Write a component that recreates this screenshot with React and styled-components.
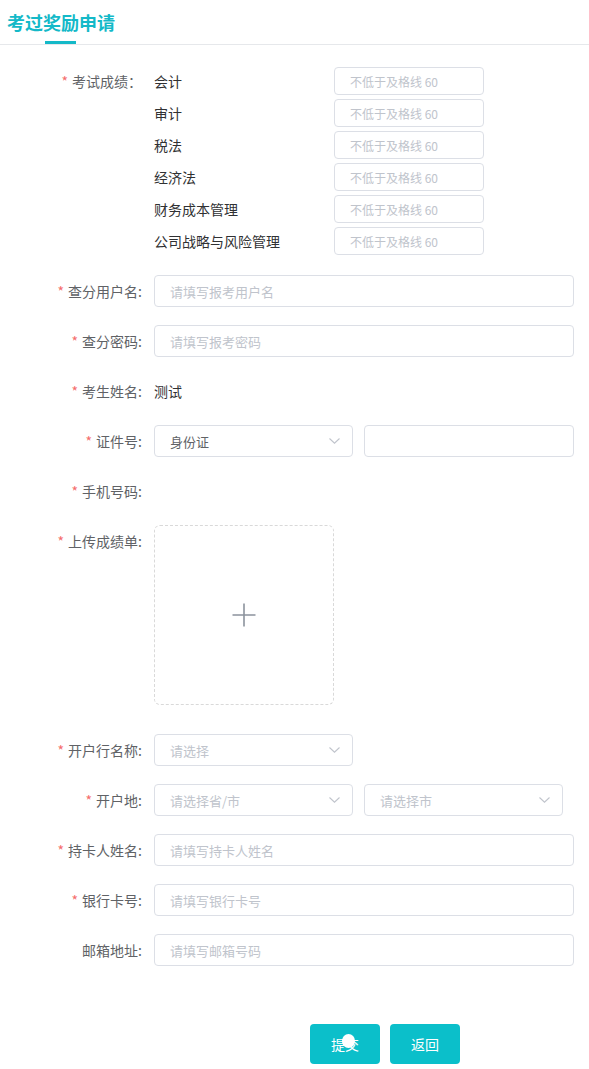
import React from 'react';
import styled, { createGlobalStyle } from 'styled-components';

const subjects = ['会计', '审计', '税法', '经济法', '财务成本管理', '公司战略与风险管理'];

function Chevron() {
  return (
    <svg width="11" height="6" viewBox="0 0 11 6" fill="none">
      <path d="M0.5 0.5 L5.5 5.2 L10.5 0.5" stroke="#c0c4cc" strokeWidth="1.1" />
    </svg>
  );
}

function Select({ value, placeholder }) {
  return (
    <StSelect>
      <StSelectText $empty={!value}>{value || placeholder}</StSelectText>
      <Chevron />
    </StSelect>
  );
}

function Item({ label, required, children, $gap }) {
  return (
    <StItem $gap={$gap}>
      <StLabel>
        {required && <StStar>*</StStar>}
        {label}
      </StLabel>
      <StControl>{children}</StControl>
    </StItem>
  );
}

function App() {
  return (
    <StPage>
      <GlobalStyle />
      <StHeader>
        <StTitle>考过奖励申请</StTitle>
        <StTabBar />
      </StHeader>

      <StForm>
        <StScoreItem>
          <StScoreLabel>
            <StStar>*</StStar>考试成绩：
          </StScoreLabel>
          <StScoreList>
            {subjects.map((s) => (
              <StScoreRow key={s}>
                <StSubject>{s}</StSubject>
                <StScoreInput placeholder="不低于及格线 60" />
              </StScoreRow>
            ))}
          </StScoreList>
        </StScoreItem>

        <Item label="查分用户名:" required>
          <StInput placeholder="请填写报考用户名" />
        </Item>
        <Item label="查分密码:" required>
          <StInput placeholder="请填写报考密码" />
        </Item>
        <Item label="考生姓名:" required>
          <StValue>测试</StValue>
        </Item>
        <Item label="证件号:" required>
          <StPair>
            <Select value="身份证" />
            <StInput $width="210px" />
          </StPair>
        </Item>
        <Item label="手机号码:" required>
          <StValue />
        </Item>
        <Item label="上传成绩单:" required $gap="29px">
          <StUpload>
            <svg width="24" height="24" viewBox="0 0 24 24">
              <path d="M12 0.5 V23.5 M0.5 12 H23.5" stroke="#8c939d" strokeWidth="1.6" />
            </svg>
          </StUpload>
        </Item>
        <Item label="开户行名称:" required>
          <Select placeholder="请选择" />
        </Item>
        <Item label="开户地:" required>
          <StPair>
            <Select placeholder="请选择省/市" />
            <Select placeholder="请选择市" />
          </StPair>
        </Item>
        <Item label="持卡人姓名:" required>
          <StInput placeholder="请填写持卡人姓名" />
        </Item>
        <Item label="银行卡号:" required>
          <StInput placeholder="请填写银行卡号" />
        </Item>
        <Item label="邮箱地址:" $gap="0">
          <StInput placeholder="请填写邮箱号码" />
        </Item>
      </StForm>

      <StFooter>
        <StButton>
          提交
          <StCursor />
        </StButton>
        <StButton>返回</StButton>
      </StFooter>
    </StPage>
  );
}

export default App;

const GlobalStyle = createGlobalStyle`
  body {
    margin: 0;
    background: #fff;
    font-family: "Noto Sans CJK SC", "Noto Sans", sans-serif;
  }
  input::placeholder {
    color: #c0c4cc;
  }
`;

const StPage = styled.div`
  width: 589px;
`;

const StHeader = styled.div`
  position: relative;
  height: 44px;
  border-bottom: 1px solid #e6e8eb;
`;

const StTitle = styled.h1`
  margin: 0;
  padding-left: 7px;
  font-size: 18px;
  font-weight: bold;
  line-height: 44px;
  color: #14b9c8;
`;

const StTabBar = styled.div`
  position: absolute;
  left: 45px;
  bottom: 0;
  width: 31px;
  height: 3px;
  background: #14b9c8;
`;

const StForm = styled.div`
  padding-top: 22px;
  padding-right: 15px;
`;

const StScoreItem = styled.div`
  display: flex;
  margin-bottom: 20px;
`;

const StLabel = styled.div`
  width: 154px;
  flex-shrink: 0;
  box-sizing: border-box;
  padding-right: 12px;
  text-align: right;
  font-size: 14px;
  line-height: 32px;
  color: #606266;
`;

const StScoreLabel = styled(StLabel)`
  line-height: 28px;
`;

const StStar = styled.span`
  color: #f56c6c;
  margin-right: 4px;
`;

const StScoreList = styled.div`
  display: flex;
  flex-direction: column;
  gap: 4px;
`;

const StScoreRow = styled.div`
  display: flex;
  align-items: center;
`;

const StSubject = styled.div`
  width: 180px;
  font-size: 14px;
  line-height: 28px;
  color: #303133;
`;

const StScoreInput = styled.input`
  width: 150px;
  height: 28px;
  box-sizing: border-box;
  padding: 0 15px;
  border: 1px solid #dcdfe6;
  border-radius: 4px;
  font-family: inherit;
  font-size: 12px;
  outline: none;
`;

const StItem = styled.div`
  display: flex;
  margin-bottom: ${(p) => p.$gap || '18px'};
`;

const StControl = styled.div`
  flex: 1;
  min-height: 32px;
`;

const StInput = styled.input`
  display: block;
  width: ${(p) => p.$width || '100%'};
  height: 32px;
  box-sizing: border-box;
  padding: 0 15px;
  border: 1px solid #dcdfe6;
  border-radius: 4px;
  font-family: inherit;
  font-size: 13px;
  color: #606266;
  outline: none;
`;

const StValue = styled.div`
  font-size: 14px;
  line-height: 32px;
  color: #303133;
`;

const StPair = styled.div`
  display: flex;
  gap: 11px;
`;

const StSelect = styled.div`
  width: 199px;
  height: 32px;
  box-sizing: border-box;
  padding: 0 12px 0 15px;
  border: 1px solid #dcdfe6;
  border-radius: 4px;
  display: flex;
  align-items: center;
  justify-content: space-between;
`;

const StSelectText = styled.span`
  font-size: 13px;
  color: ${(p) => (p.$empty ? '#c0c4cc' : '#606266')};
`;

const StUpload = styled.div`
  width: 180px;
  height: 180px;
  box-sizing: border-box;
  border: 1px dashed #d9d9d9;
  border-radius: 6px;
  display: flex;
  align-items: center;
  justify-content: center;
`;

const StFooter = styled.div`
  display: flex;
  gap: 10px;
  padding: 58px 0 0 310px;
`;

const StButton = styled.button`
  position: relative;
  width: 70px;
  height: 40px;
  border: none;
  border-radius: 4px;
  background: #0bbfca;
  color: #fff;
  font-family: inherit;
  font-size: 14px;
  cursor: pointer;
`;

const StCursor = styled.span`
  position: absolute;
  left: 32px;
  top: 10px;
  width: 13px;
  height: 14px;
  border-radius: 50%;
  background: #fff;
`;
